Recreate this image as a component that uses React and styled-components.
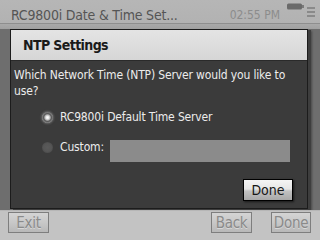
import React from "react";
import styled, { createGlobalStyle } from "styled-components";

const Global = createGlobalStyle`
  html, body { margin: 0; padding: 0; width: 320px; height: 240px; overflow: hidden; background: #707070; }
  * { box-sizing: border-box; }
`;

const font = `"DejaVu Sans Condensed", "DejaVu Sans", sans-serif`;

const Screen = styled.div`
  width: 320px;
  height: 240px;
  display: flex;
  flex-direction: column;
  font-family: ${font};
  font-stretch: condensed;
`;

const Header = styled.div`
  height: 29px;
  flex: none;
  background: linear-gradient(#b6b6b6 0, #b2b2b2 23px, #8e8e8e 23px, #8e8e8e 24px, #a9a9a9 24px, #a0a0a0 29px);
  display: flex;
  align-items: flex-start;
  padding: 6px 5px 0 11px;
`;

const Title = styled.div`
  font-size: 14px;
  letter-spacing: -0.2px;
  line-height: 18px;
  color: #555;
  flex: 1;
  white-space: nowrap;
`;

const Clock = styled.div`
  font-size: 12px;
  line-height: 18px;
  color: #8c8c8c;
  margin-right: 7px;
`;

const StatusIcons = styled.div`
  display: flex;
  align-items: flex-start;
  gap: 3px;
  margin-top: -3px;
`;

const Main = styled.div`
  flex: 1;
  background: #6e6e6e;
  padding: 0 12px 1px 10px;
  display: flex;
`;

const Dialog = styled.div`
  flex: 1;
  display: flex;
  flex-direction: column;
  border: 1px solid #1c1c1c;
  box-shadow: 3px 1px 0 #3e3e3e, 4px 2px 2px rgba(0,0,0,0.35);
  background: #3b3b3b;
`;

const DialogTitle = styled.div`
  height: 31px;
  flex: none;
  background: linear-gradient(#e4e4e4, #d6d6d6);
  border-bottom: 1px solid #2a2a2a;
  padding-left: 12px;
  display: flex;
  align-items: center;
  font-size: 14px;
  letter-spacing: -0.6px;
  font-weight: bold;
  color: #1a1a1a;
`;

const Body = styled.div`
  flex: 1;
  display: flex;
  flex-direction: column;
  padding: 6px 4px 7px 3px;
  color: #ececec;
`;

const Prompt = styled.div`
  font-size: 12px;
  letter-spacing: -0.15px;
  line-height: 16px;
`;

const Options = styled.div`
  display: flex;
  flex-direction: column;
  gap: 8px;
  margin-top: 7px;
  padding-left: 28px;
`;

const OptionRow = styled.div`
  display: flex;
  align-items: center;
  height: 22px;
  font-size: 12px;
  letter-spacing: -0.15px;
`;

const Radio = styled.span`
  width: 11px;
  height: 11px;
  border-radius: 50%;
  flex: none;
  margin-right: 7px;
  background: ${(p) =>
    p.$checked
      ? "radial-gradient(circle, #ffffff 0, #e8e8e8 1.5px, #a8a8a8 2.8px, #555 3.8px, #7a7a7a 5px, #9a9a9a 5.5px)"
      : "radial-gradient(circle, #5a5a5a 0, #555 4px, #4c4c4c 5.5px)"};
  box-shadow: ${(p) => (p.$checked ? "0 0 2px 1px rgba(180,180,180,0.35)" : "none")};
`;

const Field = styled.div`
  flex: none;
  width: 180px;
  height: 22px;
  margin-left: 6px;
  background: #8b8b8b;
  margin-top: 8px;
`;

const DialogFooter = styled.div`
  margin-top: auto;
  display: flex;
  justify-content: flex-end;
  padding-right: 10px;
`;

const DoneButton = styled.div`
  width: 50px;
  height: 22px;
  border: 1px solid #000;
  background: linear-gradient(#f4f4f4 0, #e6e6e6 45%, #c2c2c2 55%, #a8a8a8 100%);
  box-shadow: 1px 1px 2px rgba(0,0,0,0.6);
  display: flex;
  align-items: center;
  justify-content: center;
  font-size: 14px;
  color: #161616;
`;

const Footer = styled.div`
  height: 30px;
  flex: none;
  background: #c3c3c3;
  border-top: 1px solid #b6b6b6;
  display: flex;
  align-items: flex-start;
  padding: 1px 9px 0 8px;
`;

const FooterButton = styled.div`
  width: ${(p) => p.$w}px;
  height: 21px;
  margin-left: ${(p) => p.$ml || 0}px;
  border: 1px solid #7e7e7e;
  background: linear-gradient(#d4d4d4 0, #c8c8c8 50%, #b8b8b8 100%);
  display: flex;
  align-items: center;
  justify-content: center;
  font-size: 15px;
  letter-spacing: -0.3px;
  color: #8a8a8a;
  text-shadow: 0 1px 0 #d8d8d8;
`;

const Spacer = styled.div`
  flex: 1;
`;

function Battery() {
  return (
    <svg width="17" height="7" viewBox="0 0 17 7">
      <rect x="0" y="0.5" width="15" height="6" rx="1.5" fill="#6a6a6a" />
      <rect x="15" y="2" width="2" height="3" fill="#7a7a7a" />
    </svg>
  );
}

function Menu() {
  return (
    <svg width="8" height="15" viewBox="0 0 8 15">
      <rect x="0" y="4" width="8" height="2" fill="#8a8a8a" />
      <rect x="0" y="8" width="8" height="2" fill="#8a8a8a" />
      <rect x="0" y="12" width="8" height="2" fill="#8a8a8a" />
    </svg>
  );
}

export default function App() {
  return (
    <>
      <Global />
      <Screen>
        <Header>
          <Title>RC9800i Date &amp; Time Set...</Title>
          <Clock>02:55 PM</Clock>
          <StatusIcons>
            <Battery />
            <Menu />
          </StatusIcons>
        </Header>
        <Main>
          <Dialog>
            <DialogTitle>NTP Settings</DialogTitle>
            <Body>
              <Prompt>Which Network Time (NTP) Server would you like to use?</Prompt>
              <Options>
                <OptionRow>
                  <Radio $checked />
                  RC9800i Default Time Server
                </OptionRow>
                <OptionRow>
                  <Radio />
                  Custom:
                  <Field />
                </OptionRow>
              </Options>
              <DialogFooter>
                <DoneButton>Done</DoneButton>
              </DialogFooter>
            </Body>
          </Dialog>
        </Main>
        <Footer>
          <FooterButton $w={41}>Exit</FooterButton>
          <Spacer />
          <FooterButton $w={41}>Back</FooterButton>
          <FooterButton $w={40} $ml={19}>Done</FooterButton>
        </Footer>
      </Screen>
    </>
  );
}
